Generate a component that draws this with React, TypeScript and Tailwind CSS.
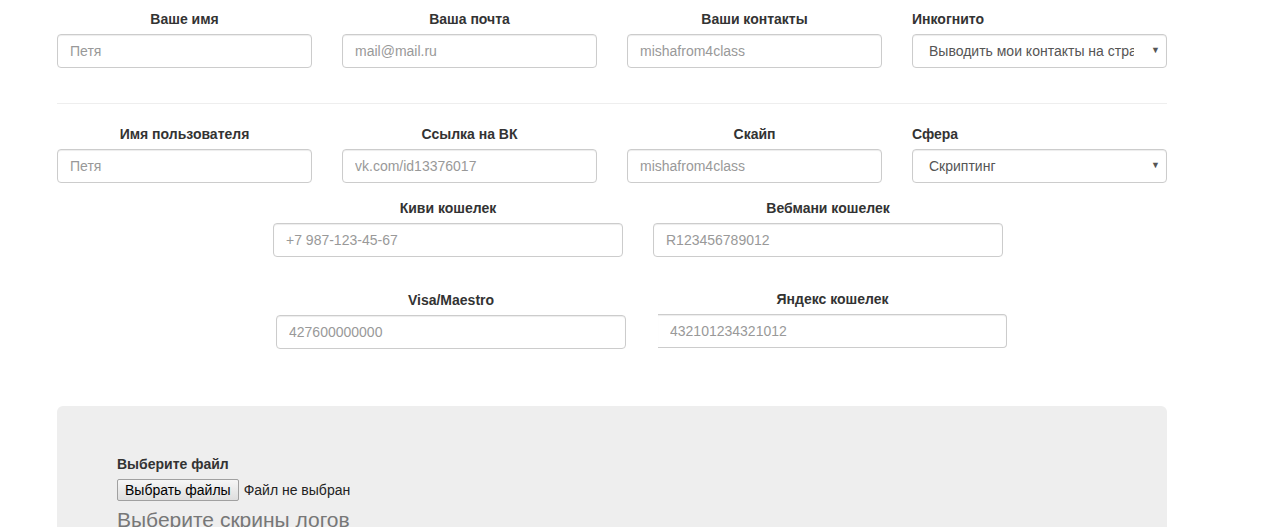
const font = { fontFamily: '"Liberation Sans", Arial, sans-serif' };

function Field({
  label,
  placeholder,
  align = "center",
}: {
  label: string;
  placeholder: string;
  align?: "center" | "left";
}) {
  return (
    <div className="w-[255px]">
      <label
        className={`block mb-[5px] text-[14px] leading-[20px] font-bold text-[#333] ${
          align === "center" ? "text-center" : "text-left"
        }`}
      >
        {label}
      </label>
      <input
        className="block w-full h-[34px] px-[12px] rounded-[4px] border border-[#ccc] bg-white text-[14px] text-[#555] placeholder:text-[#999] outline-none shadow-[inset_0_1px_1px_rgba(0,0,0,0.075)]"
        placeholder={placeholder}
      />
    </div>
  );
}

function Select({ label, value }: { label: string; value: string }) {
  return (
    <div className="w-[255px]">
      <label className="block mb-[5px] text-[14px] leading-[20px] font-bold text-[#333]">
        {label}
      </label>
      <div className="flex items-center h-[34px] pl-[16px] pr-[6px] rounded-[4px] border border-[#ccc] bg-white shadow-[inset_0_1px_1px_rgba(0,0,0,0.075)]">
        <span className="flex-1 overflow-hidden whitespace-nowrap text-[14px] text-[#555]">
          {value}
        </span>
        <span className="ml-[17px] text-[9px] text-[#555]">▼</span>
      </div>
    </div>
  );
}

function Wide({
  label,
  placeholder,
  noLeft = false,
}: {
  label: string;
  placeholder: string;
  noLeft?: boolean;
}) {
  return (
    <div className={noLeft ? "w-[349px]" : "w-[350px]"}>
      <label className="block mb-[5px] text-center text-[14px] leading-[20px] font-bold text-[#333]">
        {label}
      </label>
      <input
        className={`block w-full h-[34px] px-[12px] rounded-[4px] border border-[#ccc] bg-white text-[14px] text-[#555] placeholder:text-[#999] outline-none shadow-[inset_0_1px_1px_rgba(0,0,0,0.075)] ${
          noLeft ? "border-l-0 rounded-l-none" : ""
        }`}
        placeholder={placeholder}
      />
    </div>
  );
}

export default function App() {
  return (
    <div className="min-h-screen w-full bg-white overflow-hidden" style={font}>
      <div className="w-[1110px] ml-[57px] pt-[9px]">
        <div className="flex gap-[30px]">
          <Field label="Ваше имя" placeholder="Петя" />
          <Field label="Ваша почта" placeholder="mail@mail.ru" />
          <Field label="Ваши контакты" placeholder="mishafrom4class" />
          <Select label="Инкогнито" value="Выводить мои контакты на страницу" />
        </div>

        <hr className="mt-[35px] mb-[20px] border-0 border-t border-[#eee]" />

        <div className="flex gap-[30px]">
          <Field label="Имя пользователя" placeholder="Петя" />
          <Field label="Ссылка на ВК" placeholder="vk.com/id13376017" />
          <Field label="Скайп" placeholder="mishafrom4class" />
          <Select label="Сфера" value="Скриптинг" />
        </div>

        <div className="flex gap-[30px] mt-[15px] ml-[216px]">
          <Wide label="Киви кошелек" placeholder="+7 987-123-45-67" />
          <Wide label="Вебмани кошелек" placeholder="R123456789012" />
        </div>

        <div className="flex items-start mt-[33px] ml-[219px]">
          <Wide label="Visa/Maestro" placeholder="427600000000" />
          <div className="ml-[32px] -mt-[1px]">
            <Wide label="Яндекс кошелек" placeholder="432101234321012" noLeft />
          </div>
        </div>

        <div className="mt-[57px] rounded-[6px] bg-[#eee] pl-[60px] pt-[48px] pb-[40px]">
          <label className="block mb-[5px] text-[14px] leading-[20px] font-bold text-[#333]">
            Выберите файл
          </label>
          <div className="flex items-center gap-[5px] text-[14px]">
            <button className="h-[22px] px-[7px] border border-[#a0a0a0] rounded-[2px] bg-gradient-to-b from-[#f6f6f6] to-[#dedede] text-black">
              Выбрать файлы
            </button>
            <span className="text-[#222]">Файл не выбран</span>
          </div>
          <div className="mt-[6px] text-[21px] leading-[26px] text-[#777]">
            Выберите скрины логов
          </div>
        </div>
      </div>
    </div>
  );
}
